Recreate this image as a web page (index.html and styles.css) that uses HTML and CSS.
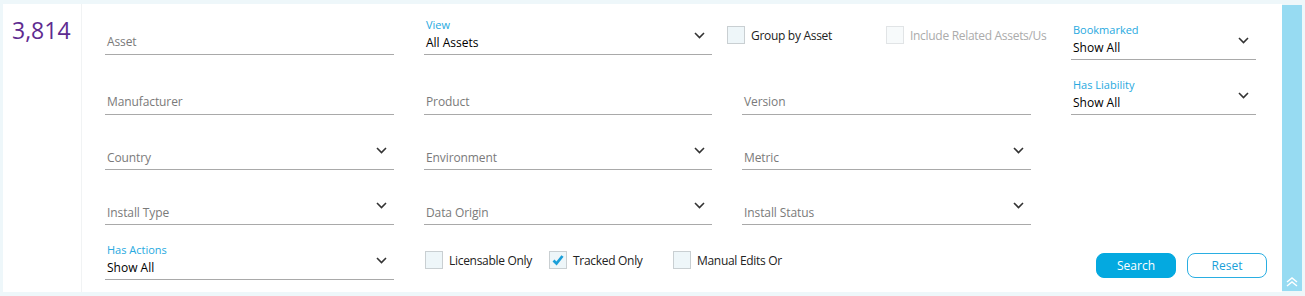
FILE: index.html
```html
<!DOCTYPE html>
<html>
<head>
<meta charset="utf-8">
<link rel="stylesheet" href="styles.css">
</head>
<body>
<div class="page">
  <div class="panel">
    <div class="count">3,814</div>
    <div class="filters">
      <div class="field text r1 c1"><span class="ph">Asset</span></div>
      <div class="field sel r1 c2">
        <div class="fv"><span class="lbl">View</span><span class="val">All Assets</span></div>
        <svg class="chev" viewBox="0 0 11 7"><path d="M1 1l4.5 4.5L10 1"/></svg>
      </div>
      <div class="checks top r1 c3">
        <label class="chk"><span class="box"></span><span class="ctext">Group by Asset</span></label>
        <label class="chk disabled"><span class="box"></span><span class="ctext">Include Related Assets/Us</span></label>
      </div>
      <div class="field sel c4 r1">
        <div class="fv"><span class="lbl">Bookmarked</span><span class="val">Show All</span></div>
        <svg class="chev" viewBox="0 0 11 7"><path d="M1 1l4.5 4.5L10 1"/></svg>
      </div>

      <div class="field text"><span class="ph">Manufacturer</span></div>
      <div class="field text"><span class="ph">Product</span></div>
      <div class="field text"><span class="ph">Version</span></div>
      <div class="field sel c4">
        <div class="fv"><span class="lbl">Has Liability</span><span class="val">Show All</span></div>
        <svg class="chev" viewBox="0 0 11 7"><path d="M1 1l4.5 4.5L10 1"/></svg>
      </div>

      <div class="field sel"><div class="fv"><span class="ph">Country</span></div><svg class="chev" viewBox="0 0 11 7"><path d="M1 1l4.5 4.5L10 1"/></svg></div>
      <div class="field sel"><div class="fv"><span class="ph">Environment</span></div><svg class="chev" viewBox="0 0 11 7"><path d="M1 1l4.5 4.5L10 1"/></svg></div>
      <div class="field sel"><div class="fv"><span class="ph">Metric</span></div><svg class="chev" viewBox="0 0 11 7"><path d="M1 1l4.5 4.5L10 1"/></svg></div>
      <div class="empty"></div>

      <div class="field sel"><div class="fv"><span class="ph">Install Type</span></div><svg class="chev" viewBox="0 0 11 7"><path d="M1 1l4.5 4.5L10 1"/></svg></div>
      <div class="field sel"><div class="fv"><span class="ph">Data Origin</span></div><svg class="chev" viewBox="0 0 11 7"><path d="M1 1l4.5 4.5L10 1"/></svg></div>
      <div class="field sel"><div class="fv"><span class="ph">Install Status</span></div><svg class="chev" viewBox="0 0 11 7"><path d="M1 1l4.5 4.5L10 1"/></svg></div>
      <div class="empty"></div>

      <div class="field sel">
        <div class="fv"><span class="lbl">Has Actions</span><span class="val">Show All</span></div>
        <svg class="chev" viewBox="0 0 11 7"><path d="M1 1l4.5 4.5L10 1"/></svg>
      </div>
      <div class="checks bottom">
        <label class="chk"><span class="box"></span><span class="ctext">Licensable Only</span></label>
        <label class="chk"><span class="box"><svg class="tick" viewBox="0 0 12 12"><path d="M1.5 6.5l3 3L10.5 2"/></svg></span><span class="ctext">Tracked Only</span></label>
        <label class="chk"><span class="box"></span><span class="ctext">Manual Edits Or</span></label>
      </div>
      <div class="buttons c4">
        <button class="btn primary">Search</button>
        <button class="btn outline">Reset</button>
      </div>
    </div>
  </div>
  <div class="sidebar">
    <svg class="dbl" viewBox="0 0 12 10"><path d="M1 5l5-4 5 4M1 9l5-4 5 4"/></svg>
  </div>
</div>
</body>
</html>
```
FILE: styles.css
```css
* { box-sizing: border-box; }
html, body { margin: 0; padding: 0; }
body {
  background: #eef7fa;
  font-family: "Open Sans", "Noto Sans", sans-serif;
  width: 1305px;
  height: 296px;
  overflow: hidden;
}
.page {
  display: flex;
  padding: 4px 3px 4px 3px;
  height: 296px;
}
.panel {
  flex: 1;
  display: flex;
  background: #fff;
  height: 288px;
}
.count {
  width: 79px;
  border-right: 1px solid #f1f3f4;
  color: #5e2b90;
  font-size: 23px;
  line-height: 30px;
  padding: 11px 0 0 9px;
}
.filters {
  display: grid;
  grid-template-columns: 289px 288px 289px 195px;
  grid-template-rows: repeat(5, 55px);
  column-gap: 30px;
  padding: 1px 0 0 23px;
  align-items: end;
}
.field {
  display: flex;
  align-items: flex-end;
  border-bottom: 1px solid #a9a9a9;
  height: 40px;
}
.r1.c1, .r1.c2 { margin-bottom: 5px; }
.c4 { margin-left: 10px; }
.fv {
  flex: 1;
  display: flex;
  flex-direction: column;
  padding: 0 0 2px 2px;
}
.text { padding: 0 0 3px 2px; }
.ph {
  color: #7a7a7a;
  font-size: 12px;
  line-height: 18px;
  letter-spacing: -0.1px;
}
.lbl {
  color: #27a9e0;
  font-size: 11px;
  line-height: 14px;
  margin-bottom: 2px;
}
.val {
  color: #000;
  font-size: 12px;
  line-height: 18px;
}
.chev {
  width: 11px;
  height: 7px;
  margin: 0 7px 15px 0;
  flex: none;
}
.chev path {
  fill: none;
  stroke: #333;
  stroke-width: 1.6;
}
.checks {
  display: flex;
}
.checks.top {
  align-self: start;
  margin: 21px 0 0 -15px;
  width: 319px;
}
.checks.top .chk { width: 160px; }
.checks.bottom {
  grid-column: 2 / 4;
  align-self: start;
  margin: 26px 0 0 1px;
}
.checks.bottom .chk { width: 124px; }
.chk {
  display: flex;
  align-items: center;
  white-space: nowrap;
}
.box {
  flex: none;
  width: 18px;
  height: 18px;
  border: 1px solid #c9cfd2;
  background: #eef6f9;
  margin-right: 6px;
  display: flex;
  align-items: center;
  justify-content: center;
}
.tick { width: 12px; height: 12px; }
.tick path {
  fill: none;
  stroke: #1a9fd9;
  stroke-width: 2.8;
}
.ctext {
  font-size: 12px;
  letter-spacing: -0.3px;
  color: #222;
}
.disabled .box { background: #f7fafb; border-color: #e1e4e6; }
.disabled .ctext { color: #ababab; }
.buttons {
  display: flex;
  gap: 11px;
  padding-left: 25px;
  align-self: start;
  margin-top: 28px;
}
.btn {
  flex: none;
  width: 80px;
  height: 25px;
  border-radius: 8px;
  font-family: "Open Sans", "Noto Sans", sans-serif;
  font-size: 12px;
  padding: 0;
  cursor: pointer;
}
.primary {
  background: #04a9e0;
  border: 1px solid #04a9e0;
  color: #fff;
}
.outline {
  background: #fff;
  border: 1px solid #2aaee2;
  color: #1a9fd9;
}
.sidebar {
  width: 20px;
  margin: 1px 0;
  background: #97dbf2;
  display: flex;
  align-items: flex-end;
  justify-content: center;
  padding-bottom: 4px;
}
.dbl { width: 12px; height: 10px; }
.dbl path {
  fill: none;
  stroke: #fff;
  stroke-width: 1.4;
}
```
